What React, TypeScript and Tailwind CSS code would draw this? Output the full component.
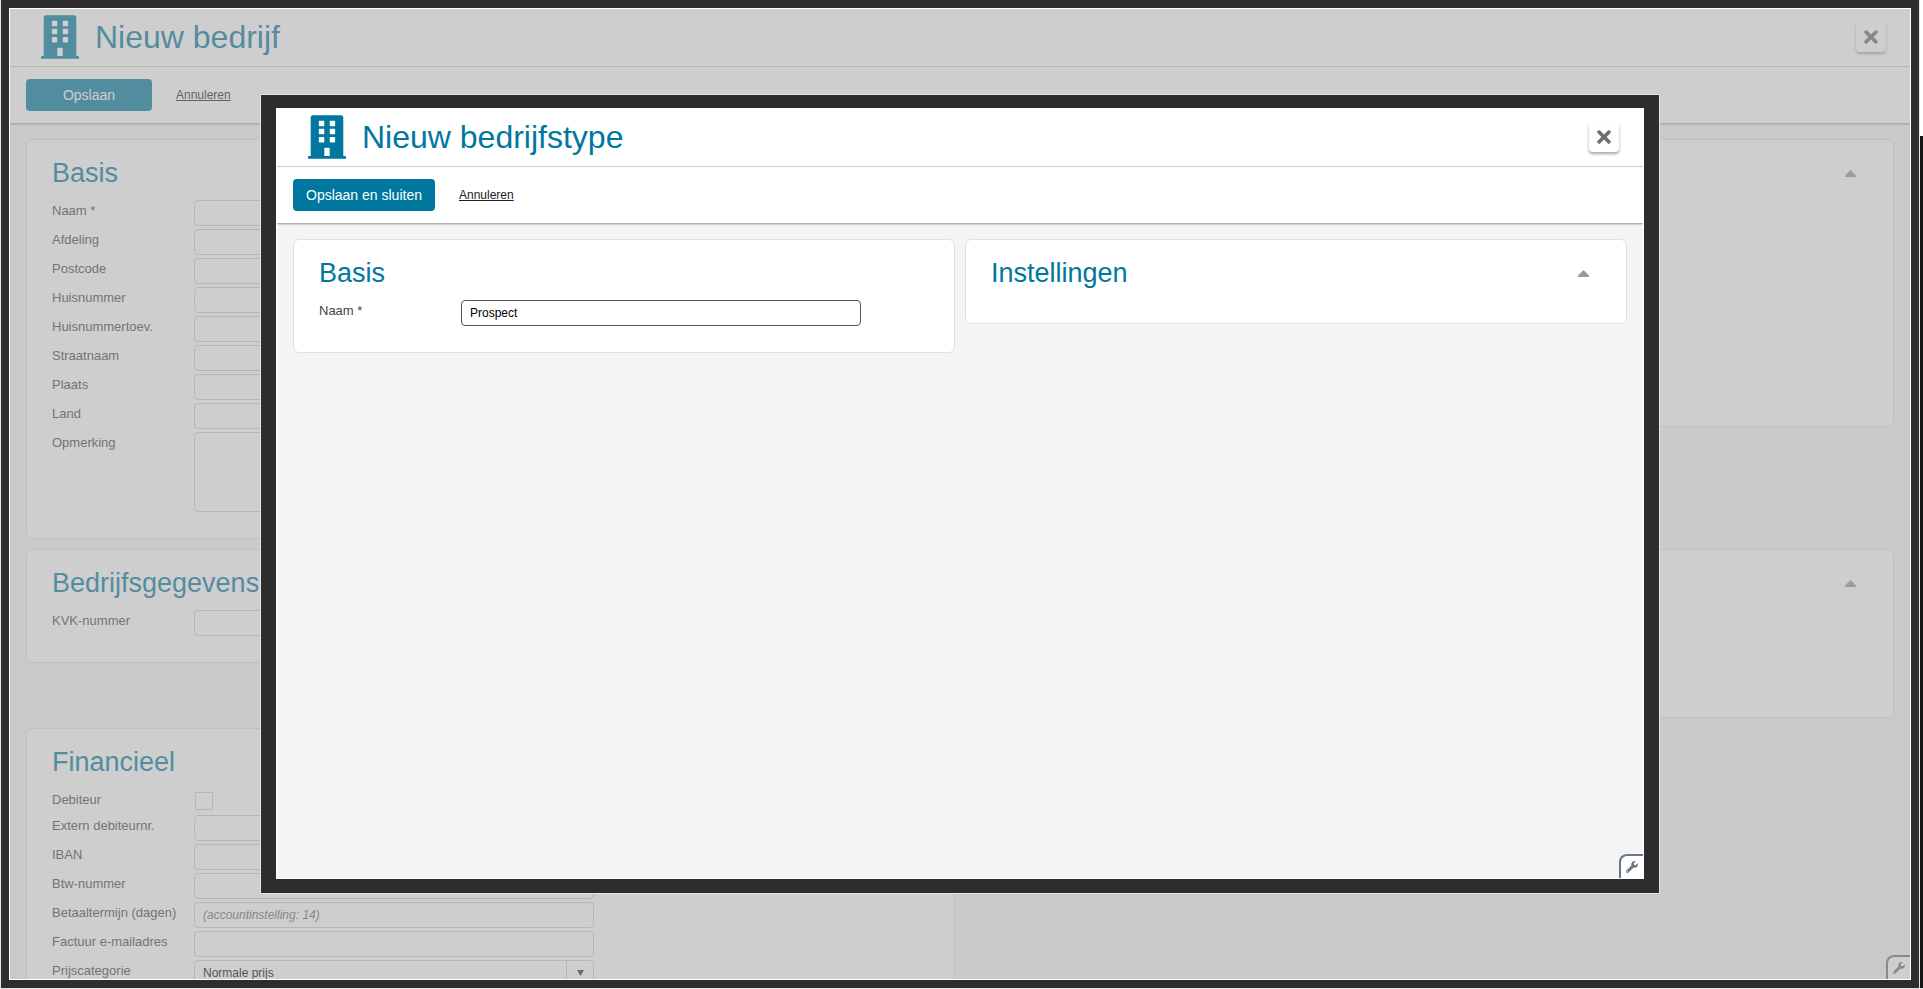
import { useId } from "react";
import type { ReactNode } from "react";
import { FaBuilding, FaTimes, FaWrench } from "react-icons/fa";

const fieldClass =
  "h-[26px] w-[400px] max-w-full rounded border bg-white px-2 text-xs text-black placeholder:italic placeholder:text-[#6c6c6c]";

function Row({ label, id, children }: { label: string; id: string; children: ReactNode }) {
  return (
    <div className="flex items-start">
      <label htmlFor={id} className="w-[142px] shrink-0 pt-[3px] text-[13px] leading-4 text-[#444444]">
        {label}
      </label>
      {children}
    </div>
  );
}

function TextRow({
  label,
  value,
  placeholder,
  active,
}: {
  label: string;
  value?: string;
  placeholder?: string;
  active?: boolean;
}) {
  const id = useId();
  return (
    <Row label={label} id={id}>
      <input
        id={id}
        type="text"
        defaultValue={value}
        placeholder={placeholder}
        className={`${fieldClass} ${active ? "border-[#555555]" : "border-[#cecece]"}`}
      />
    </Row>
  );
}

function AreaRow({ label }: { label: string }) {
  const id = useId();
  return (
    <Row label={label} id={id}>
      <textarea
        id={id}
        className="block h-20 w-[400px] max-w-full resize-none rounded border border-[#cecece] bg-white px-2 py-1 text-xs"
      />
    </Row>
  );
}

function CheckRow({ label }: { label: string }) {
  const id = useId();
  return (
    <Row label={label} id={id}>
      <input
        id={id}
        type="checkbox"
        className="mx-px mt-[3px] mb-0.5 size-[18px] appearance-none rounded-[1px] border border-[#cecece] bg-white"
      />
    </Row>
  );
}

function SelectRow({ label, options }: { label: string; options: string[] }) {
  const id = useId();
  return (
    <Row label={label} id={id}>
      <div className="relative w-[400px] max-w-full">
        <select
          id={id}
          className="block h-[26px] w-full appearance-none rounded border border-[#cecece] bg-white pr-8 pl-2 text-xs text-black"
        >
          {options.map((o) => (
            <option key={o}>{o}</option>
          ))}
        </select>
        <span className="pointer-events-none absolute inset-y-0 right-0 flex w-7 items-center justify-center border-l border-[#cecece]">
          <svg viewBox="0 0 7 6" className="h-1.5 w-[7px]" fill="#333333">
            <path d="M0 0h7L3.5 6z" />
          </svg>
        </span>
      </div>
    </Row>
  );
}

function Card({
  title,
  collapsible,
  className = "",
  children,
}: {
  title?: string;
  collapsible?: boolean;
  className?: string;
  children?: ReactNode;
}) {
  return (
    <section className={`rounded-md border border-[#e0e0e0] bg-white px-[25px] pb-[23px] ${className}`}>
      <div className="flex h-[60px] items-center pt-1.5">
        <h2 className="text-[27px] leading-8 text-[#00779e]">{title}</h2>
        {collapsible && (
          <button type="button" aria-label="Inklappen" className="mr-3 ml-auto">
            <svg viewBox="0 0 11 7" className="h-[7px] w-[11px]" fill="#999999">
              <path d="M5.5 0 11 5.5V7H0V5.5z" />
            </svg>
          </button>
        )}
      </div>
      {children && <div className="flex flex-col gap-[3px] pb-[3px]">{children}</div>}
    </section>
  );
}

function Page({ title, save, children }: { title: string; save: string; children: ReactNode }) {
  return (
    <div className="relative flex h-full flex-col overflow-hidden bg-[#f4f4f4]">
      <header className="flex h-[58px] shrink-0 items-center border-b border-[#d2d2d2] bg-white pr-6 pb-0.5 pl-[31px]">
        <FaBuilding className="h-11 w-[38px] text-[#00779e]" />
        <h1 className="ml-4 text-[32px] leading-10 text-[#00779e]">{title}</h1>
        <button
          type="button"
          aria-label="Sluiten"
          className="ml-auto flex size-[30px] items-center justify-center rounded bg-white shadow-[0_2px_3px_rgba(0,0,0,0.35)]"
        >
          <FaTimes className="size-5 text-[#707070]" />
        </button>
      </header>
      <div className="z-10 flex h-14 shrink-0 items-center gap-6 bg-white px-4 shadow-[0_1px_2px_rgba(0,0,0,0.4)]">
        <button type="button" className="h-8 min-w-[126px] rounded bg-[#00779e] px-[13px] text-sm text-white">
          {save}
        </button>
        <a href="#annuleren" className="text-xs text-[#222222] underline">
          Annuleren
        </a>
      </div>
      <main className="grid grid-cols-2 items-start gap-2.5 p-4">{children}</main>
      <button
        type="button"
        aria-label="Beheer"
        className="absolute right-0 bottom-0 flex size-6 items-center justify-center rounded-tl-lg border-t-2 border-l-2 border-[#66788a] bg-white text-[#66788a]"
      >
        <FaWrench className="size-3" />
      </button>
    </div>
  );
}

export default function App() {
  return (
    <div className="relative flex h-screen overflow-hidden bg-[#e4e4e4] pb-px pl-px font-['Liberation_Sans',Arial,sans-serif]">
      <div className="min-w-0 flex-1 border-8 border-[#2d2d2d]">
        <div className="relative h-full border border-white">
          <Page title="Nieuw bedrijf" save="Opslaan">
            <Card title="Basis">
              <TextRow label="Naam *" />
              <TextRow label="Afdeling" />
              <TextRow label="Postcode" />
              <TextRow label="Huisnummer" />
              <TextRow label="Huisnummertoev." />
              <TextRow label="Straatnaam" />
              <TextRow label="Plaats" />
              <TextRow label="Land" />
              <AreaRow label="Opmerking" />
            </Card>
            <Card collapsible className="h-72" />
            <Card title="Bedrijfsgegevens">
              <TextRow label="KVK-nummer" />
            </Card>
            <Card collapsible className="h-[169px]" />
            <Card title="Financieel">
              <CheckRow label="Debiteur" />
              <TextRow label="Extern debiteurnr." />
              <TextRow label="IBAN" />
              <TextRow label="Btw-nummer" />
              <TextRow label="Betaaltermijn (dagen)" placeholder="(accountinstelling: 14)" />
              <TextRow label="Factuur e-mailadres" />
              <SelectRow label="Prijscategorie" options={["Normale prijs"]} />
            </Card>
          </Page>
          <div className="absolute inset-0 z-20 bg-[rgba(160,160,160,0.514)]" />
        </div>
      </div>
      <div className="flex w-1 shrink-0 flex-col pl-px">
        <div className="h-[136px] bg-white" />
        <div className="flex-1 bg-[#151515]" />
      </div>
      <div
        role="dialog"
        aria-label="Nieuw bedrijfstype"
        className="absolute top-[94px] right-[263px] bottom-[95px] left-[260px] z-30 border border-[#e4e4e4]"
      >
        <div className="h-full border-x-[15px] border-t-[13px] border-b-[14px] border-[#2d2d2d]">
          <div className="h-full border border-white">
            <Page title="Nieuw bedrijfstype" save="Opslaan en sluiten">
              <Card title="Basis">
                <TextRow label="Naam *" value="Prospect" active />
              </Card>
              <Card title="Instellingen" collapsible />
            </Page>
          </div>
        </div>
      </div>
    </div>
  );
}
